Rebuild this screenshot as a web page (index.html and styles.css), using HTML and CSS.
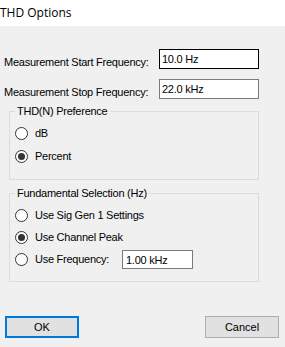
FILE: index.html
```html
<!DOCTYPE html>
<html lang="en">
<head>
    <meta charset="UTF-8">
    <meta name="viewport" content="width=device-width, initial-scale=1.0">
    <title>THD Options</title>
    <link rel="stylesheet" href="styles.css">
</head>
<body>
    <div class="titlebar">THD Options</div>
    <div class="dialog">
        <div class="row">
            <label for="start">Measurement Start Frequency:</label>
            <input type="text" id="start" class="field focused" value="10.0 Hz">
        </div>
        <div class="row">
            <label for="stop">Measurement Stop Frequency:</label>
            <input type="text" id="stop" class="field" value="22.0 kHz">
        </div>

        <fieldset class="group group-pref">
            <legend>THD(N) Preference</legend>
            <label class="option"><input type="radio" name="pref"> dB</label>
            <label class="option"><input type="radio" name="pref" checked> Percent</label>
        </fieldset>

        <fieldset class="group group-fund">
            <legend>Fundamental Selection (Hz)</legend>
            <label class="option"><input type="radio" name="fund"> Use Sig Gen 1 Settings</label>
            <label class="option"><input type="radio" name="fund" checked> Use Channel Peak</label>
            <div class="option">
                <label class="option-label"><input type="radio" name="fund"> Use Frequency:</label>
                <input type="text" class="field small" value="1.00 kHz">
            </div>
        </fieldset>

        <div class="buttons">
            <button class="btn default">OK</button>
            <button class="btn">Cancel</button>
        </div>
    </div>
</body>
</html>
```

FILE: styles.css
```css
body {
    margin: 0;
    width: 285px;
    height: 347px;
    background-color: #f0f0f0;
    font-family: "Liberation Sans", Arial, sans-serif;
    font-size: 11px;
    line-height: 13px;
    letter-spacing: -0.25px;
    color: #000;
    overflow: hidden;
}
.titlebar {
    height: 26px;
    background: white;
    font-family: "Open Sans", "Noto Sans", sans-serif;
    font-size: 12px;
    line-height: 26px;
    letter-spacing: 0;
}
.dialog {
    display: flex;
    flex-direction: column;
    padding: 23px 0 0 4px;
}
.row {
    display: flex;
    align-items: flex-start;
    height: 20px;
    margin-bottom: 10px;
}
.row label {
    width: 155px;
    padding-top: 7px;
}
.field {
    box-sizing: border-box;
    width: 100px;
    height: 20px;
    margin: 0;
    padding: 3px 2px;
    border: 1px solid #7a7a7a;
    background: white;
    font-family: inherit;
    font-size: 11px;
    line-height: 13px;
    letter-spacing: -0.25px;
    color: #000;
    outline: none;
}
.field.focused {
    border-color: #000;
}
.field.small {
    width: 71px;
    height: 19px;
    padding: 2px 3px;
}
.group {
    margin: 0 0 0 5px;
    width: 250px;
    box-sizing: border-box;
    border: 1px solid #dcdcdc;
    padding: 9px 5px 16px;
    display: flex;
    flex-direction: column;
    gap: 10px;
}
.group legend {
    padding: 0 2px;
    margin-left: 0;
}
.group-pref {
    margin-top: -4px;
}
.group-fund {
    margin-top: 7px;
    padding-bottom: 12px;
    gap: 9px;
}
.option {
    display: flex;
    align-items: center;
    height: 13px;
}
.option-label {
    display: flex;
    align-items: center;
    width: 107px;
}
.group-fund .option:last-child {
    height: 19px;
    margin-top: -3px;
}
input[type="radio"] {
    appearance: none;
    box-sizing: border-box;
    width: 13px;
    height: 13px;
    margin: 0 7px 0 0;
    border: 1px solid #333;
    border-radius: 50%;
    background: white;
    display: flex;
    align-items: center;
    justify-content: center;
}
input[type="radio"]:checked::after {
    content: "";
    width: 7px;
    height: 7px;
    border-radius: 50%;
    background: #333;
}
.buttons {
    display: flex;
    justify-content: space-between;
    margin-top: 34px;
    padding-right: 6px;
    padding-left: 1px;
}
.btn {
    box-sizing: border-box;
    width: 74px;
    height: 22px;
    margin: 0;
    padding: 0;
    border: 1px solid #adadad;
    background: #e1e1e1;
    font-family: inherit;
    font-size: 11px;
    color: #000;
}
.btn.default {
    border: 2px solid #0078d7;
}
```
